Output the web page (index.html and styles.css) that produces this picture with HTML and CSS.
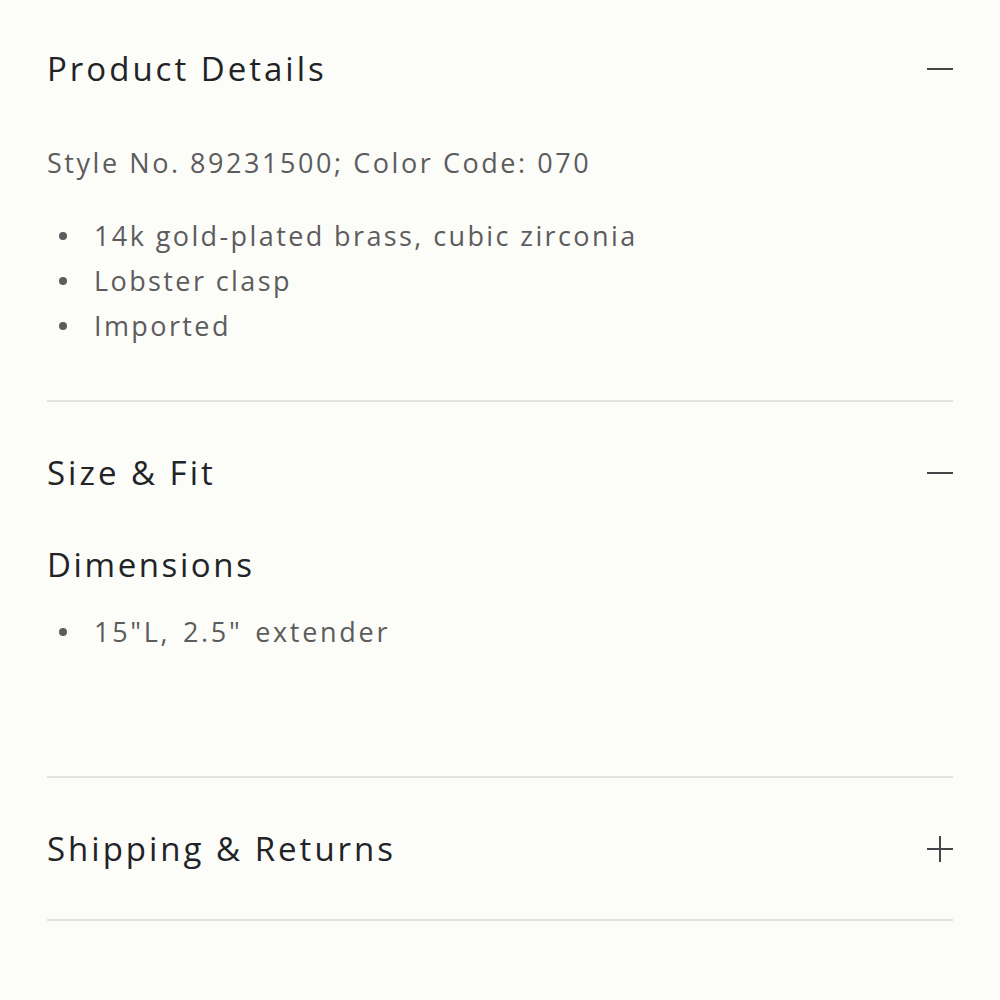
FILE: index.html
```html
<!DOCTYPE html>
<html lang="en">
<head>
<meta charset="utf-8">
<title>Product Details</title>
<link rel="stylesheet" href="styles.css">
</head>
<body>
<main class="accordion">
  <section class="section section-first">
    <div class="section-header">
      <h2 class="section-title">Product Details</h2>
      <span class="toggle toggle-minus" aria-hidden="true"></span>
    </div>
    <div class="section-body body-details">
      <p class="meta">Style No. 89231500; Color Code: 070</p>
      <ul class="bullets">
        <li>14k gold-plated brass, cubic zirconia</li>
        <li>Lobster clasp</li>
        <li>Imported</li>
      </ul>
    </div>
  </section>
  <section class="section">
    <div class="section-header">
      <h2 class="section-title">Size &amp; Fit</h2>
      <span class="toggle toggle-minus" aria-hidden="true"></span>
    </div>
    <div class="section-body body-size">
      <h3 class="sub-title">Dimensions</h3>
      <ul class="bullets">
        <li class="dims">15"L, 2.5" extender</li>
      </ul>
    </div>
  </section>
  <section class="section">
    <div class="section-header">
      <h2 class="section-title">Shipping &amp; Returns</h2>
      <span class="toggle toggle-plus" aria-hidden="true"></span>
    </div>
  </section>
</main>
</body>
</html>
```

FILE: styles.css
```css
html, body {
  margin: 0;
  padding: 0;
  background: #fcfcf8;
}

body {
  font-family: "Open Sans", "Lato", sans-serif;
  color: #222326;
}

.accordion {
  padding: 0 47px;
}

.section {
  border-bottom: 2px solid #e3e2de;
}

.section-header {
  height: 141px;
  display: flex;
  align-items: center;
  justify-content: space-between;
}

.section-first .section-header {
  height: 137px;
}

.section-title {
  margin: 0;
  font-size: 33px;
  font-weight: 400;
  letter-spacing: 3px;
  line-height: 44px;
  color: #222326;
}

.toggle {
  position: relative;
  width: 26px;
  height: 26px;
  flex: none;
}

.toggle::before,
.toggle::after {
  content: "";
  position: absolute;
  background: #46464a;
}

.toggle::before {
  left: 0;
  right: 0;
  top: 12px;
  height: 2px;
}

.toggle-plus::after {
  top: 0;
  bottom: 0;
  left: 12px;
  width: 2px;
}

.section-body {
  color: #5c5c5f;
}

.body-details {
  padding: 3px 0 52px;
}

.body-size {
  padding: 0 0 122px;
}

.meta {
  margin: 0 0 28px;
  font-size: 27px;
  line-height: 45px;
  letter-spacing: 2.55px;
}

.sub-title {
  margin: 0 0 22px;
  font-size: 33px;
  font-weight: 400;
  letter-spacing: 2.6px;
  line-height: 44px;
  color: #222326;
}

.bullets {
  list-style: none;
  margin: 0;
  padding: 0;
}

.bullets li {
  display: flex;
  align-items: center;
  font-size: 27px;
  line-height: 45px;
  letter-spacing: 2.4px;
}

.bullets li.dims {
  letter-spacing: 2.7px;
  word-spacing: 3px;
}

.bullets li::before {
  content: "";
  width: 8px;
  height: 8px;
  border-radius: 50%;
  background: #5c5c5f;
  margin: 0 27px 0 12px;
  flex: none;
}
```
